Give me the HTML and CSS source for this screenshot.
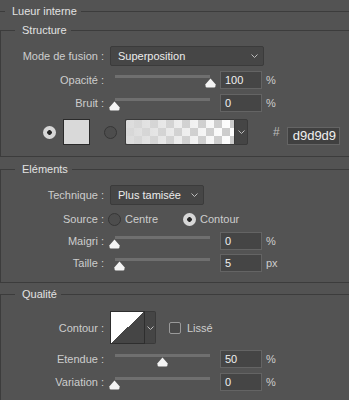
FILE: index.html
```html
<!doctype html>
<html lang="fr">
<head>
    <meta charset="utf-8">
    <title>Lueur interne</title>
    <link rel="stylesheet" href="styles.css">
</head>
<body>
    <div class="panel">
        <div class="panel-title"><span>Lueur interne</span></div>

        <fieldset class="group">
            <legend>Structure</legend>
            <div class="row row-select">
                <span class="lbl">Mode de fusion :</span>
                <div class="select select-wide">
                    <span>Superposition</span>
                    <svg class="chev" width="7" height="4" viewBox="0 0 7 4"><polyline points="0.5,0.5 3.5,3.5 6.5,0.5"/></svg>
                </div>
            </div>
            <div class="row">
                <span class="lbl">Opacité :</span>
                <div class="slider">
                    <div class="track"></div>
                    <svg class="thumb" style="left:94.5px" width="11" height="10" viewBox="0 0 11 10"><path d="M5.5 0.5 L10.5 6.2 V8 Q10.5 9.5 9 9.5 H2 Q0.5 9.5 0.5 8 V6.2 Z"/></svg>
                </div>
                <div class="field">100</div>
                <span class="unit">%</span>
            </div>
            <div class="row">
                <span class="lbl">Bruit :</span>
                <div class="slider">
                    <div class="track"></div>
                    <svg class="thumb" style="left:-1.5px" width="11" height="10" viewBox="0 0 11 10"><path d="M5.5 0.5 L10.5 6.2 V8 Q10.5 9.5 9 9.5 H2 Q0.5 9.5 0.5 8 V6.2 Z"/></svg>
                </div>
                <div class="field">0</div>
                <span class="unit">%</span>
            </div>
            <div class="row row-color">
                <span class="radio on"></span>
                <span class="swatch"></span>
                <span class="radio"></span>
                <div class="gradient"></div>
                <div class="drop">
                    <svg class="chev" width="7" height="4" viewBox="0 0 7 4"><polyline points="0.5,0.5 3.5,3.5 6.5,0.5"/></svg>
                </div>
                <span class="hash">#</span>
                <div class="field hex">d9d9d9</div>
            </div>
        </fieldset>

        <fieldset class="group">
            <legend>Eléments</legend>
            <div class="row row-select">
                <span class="lbl">Technique :</span>
                <div class="select select-short">
                    <span>Plus tamisée</span>
                    <svg class="chev" width="7" height="4" viewBox="0 0 7 4"><polyline points="0.5,0.5 3.5,3.5 6.5,0.5"/></svg>
                </div>
            </div>
            <div class="row row-source">
                <span class="lbl">Source :</span>
                <span class="radio"></span>
                <span class="opt">Centre</span>
                <span class="radio on second"></span>
                <span class="opt">Contour</span>
            </div>
            <div class="row tight">
                <span class="lbl">Maigri :</span>
                <div class="slider">
                    <div class="track"></div>
                    <svg class="thumb" style="left:-1.5px" width="11" height="10" viewBox="0 0 11 10"><path d="M5.5 0.5 L10.5 6.2 V8 Q10.5 9.5 9 9.5 H2 Q0.5 9.5 0.5 8 V6.2 Z"/></svg>
                </div>
                <div class="field">0</div>
                <span class="unit">%</span>
            </div>
            <div class="row tight">
                <span class="lbl">Taille :</span>
                <div class="slider">
                    <div class="track"></div>
                    <svg class="thumb" style="left:3.5px" width="11" height="10" viewBox="0 0 11 10"><path d="M5.5 0.5 L10.5 6.2 V8 Q10.5 9.5 9 9.5 H2 Q0.5 9.5 0.5 8 V6.2 Z"/></svg>
                </div>
                <div class="field">5</div>
                <span class="unit">px</span>
            </div>
        </fieldset>

        <fieldset class="group last">
            <legend>Qualité</legend>
            <div class="row row-curve">
                <span class="lbl">Contour :</span>
                <div class="curve"></div>
                <div class="drop drop-curve">
                    <svg class="chev" width="7" height="4" viewBox="0 0 7 4"><polyline points="0.5,0.5 3.5,3.5 6.5,0.5"/></svg>
                </div>
                <span class="check"></span>
                <span class="opt">Lissé</span>
            </div>
            <div class="row row-after-curve">
                <span class="lbl">Etendue :</span>
                <div class="slider">
                    <div class="track"></div>
                    <svg class="thumb" style="left:47px" width="11" height="10" viewBox="0 0 11 10"><path d="M5.5 0.5 L10.5 6.2 V8 Q10.5 9.5 9 9.5 H2 Q0.5 9.5 0.5 8 V6.2 Z"/></svg>
                </div>
                <div class="field">50</div>
                <span class="unit">%</span>
            </div>
            <div class="row">
                <span class="lbl">Variation :</span>
                <div class="slider">
                    <div class="track"></div>
                    <svg class="thumb" style="left:-1.5px" width="11" height="10" viewBox="0 0 11 10"><path d="M5.5 0.5 L10.5 6.2 V8 Q10.5 9.5 9 9.5 H2 Q0.5 9.5 0.5 8 V6.2 Z"/></svg>
                </div>
                <div class="field">0</div>
                <span class="unit">%</span>
            </div>
        </fieldset>
    </div>
</body>
</html>
```

FILE: styles.css
```css
* {
    box-sizing: border-box;
}

body {
    margin: 0;
    background: #535353;
    color: #cdcdcd;
    font-family: "Liberation Sans", Arial, sans-serif;
    font-size: 11px;
    overflow: hidden;
}

.panel {
    width: 349px;
    height: 400px;
}

/* titre principal avec ligne */
.panel-title {
    display: flex;
    align-items: center;
    height: 22px;
    color: #e2e2e2;
}

.panel-title::before,
.panel-title::after {
    content: "";
    height: 1px;
    background: #3c3c3c;
}

.panel-title::before {
    width: 5px;
}

.panel-title::after {
    flex: 1;
}

.panel-title span {
    padding: 0 4px 0 7px;
}

/* groupes */
.group {
    margin: 0;
    padding: 8px 0 11px 0;
    border: 1px solid #3c3c3c;
    border-right: 0;
    min-width: 0;
}

.group + .group {
    margin-top: 4px;
    padding-bottom: 10px;
}

.group.last {
    margin-top: 3px;
    padding-top: 9px;
    padding-bottom: 20px;
}

.group legend {
    margin-left: 14px;
    padding: 0 4px 0 7px;
    line-height: 16px;
    color: #e2e2e2;
}

/* lignes */
.row {
    display: flex;
    align-items: center;
    height: 18px;
    margin-top: 5px;
}

.row.tight {
    margin-top: 4px;
}

.row-select {
    height: 20px;
    margin-top: 0;
}

.lbl {
    width: 103px;
    margin-right: 6px;
    text-align: right;
    white-space: nowrap;
}

.select {
    display: flex;
    align-items: center;
    justify-content: space-between;
    height: 20px;
    padding: 0 5px 0 7px;
    background: #464646;
    border: 1px solid #3b3b3b;
    border-radius: 2px;
    color: #ececec;
}

.select-wide {
    width: 154px;
}

.select-short {
    width: 94px;
}

.chev {
    fill: none;
    stroke: #bdbdbd;
    stroke-width: 1;
}

/* curseurs */
.slider {
    position: relative;
    width: 104px;
    height: 18px;
}

.track {
    height: 3px;
    margin: 4px 4px 0 5px;
    background: #6f6f6f;
}

.thumb {
    position: absolute;
    top: 7px;
    fill: #f4f4f4;
}

.field {
    width: 42px;
    height: 18px;
    margin-left: 6px;
    padding-left: 4px;
    line-height: 16px;
    background: #454545;
    border: 1px solid #646464;
    color: #f0f0f0;
}

.unit {
    margin-left: 4px;
}

/* couleur */
.row-color {
    height: 26px;
    margin-top: 7px;
    padding-left: 42px;
}

.radio {
    width: 13px;
    height: 13px;
    border-radius: 50%;
    border: 1px solid #363636;
    background: #4d4d4d;
}

.radio.on {
    border: 0;
    background: radial-gradient(circle, #262626 2px, #d7d7d7 2.6px);
}

.swatch {
    width: 27px;
    height: 26px;
    margin: 0 14px 0 7px;
    background: #d9d9d9;
    border: 1px solid #2a2a2a;
}

.gradient {
    width: 109px;
    height: 26px;
    margin-left: 8px;
    border: 1px solid #3a3a3a;
    border-right: 0;
    border-radius: 2px 0 0 2px;
    background:
        linear-gradient(to right, rgba(217, 217, 217, 0.95), rgba(217, 217, 217, 0)),
        repeating-conic-gradient(#cccccc 0 25%, #ffffff 0 50%) 0 0 / 16px 16px;
}

.drop {
    display: flex;
    align-items: center;
    justify-content: center;
    width: 14px;
    height: 26px;
    background: #454545;
    border: 1px solid #3a3a3a;
    border-radius: 0 2px 2px 0;
}

.hash {
    margin-left: 25px;
    font-size: 12px;
    color: #bdbdbd;
}

.hex {
    width: 53px;
    margin: 7px 0 0 7px;
    padding-left: 5px;
    font-size: 13px;
    background: #404040;
}

/* source */
.row-source .lbl {
    margin-right: 4px;
}

.opt {
    margin-left: 4px;
}

.radio.second {
    margin-left: 25px;
}

/* contour */
.row-curve {
    height: 33px;
    margin-top: 0;
}

.curve {
    width: 35px;
    height: 33px;
    border: 1px solid #2e2e2e;
    background: linear-gradient(to bottom right, #ffffff 50%, #454545 50%);
}

.drop-curve {
    width: 11px;
    height: 33px;
    border-left: 0;
}

.check {
    width: 12px;
    height: 12px;
    margin-left: 13px;
    border: 1px solid #9a9a9a;
    border-radius: 2px;
    background: #4a4a4a;
}

.row-curve .opt {
    margin-left: 6px;
}

.row-after-curve {
    margin-top: 6px;
}
```
